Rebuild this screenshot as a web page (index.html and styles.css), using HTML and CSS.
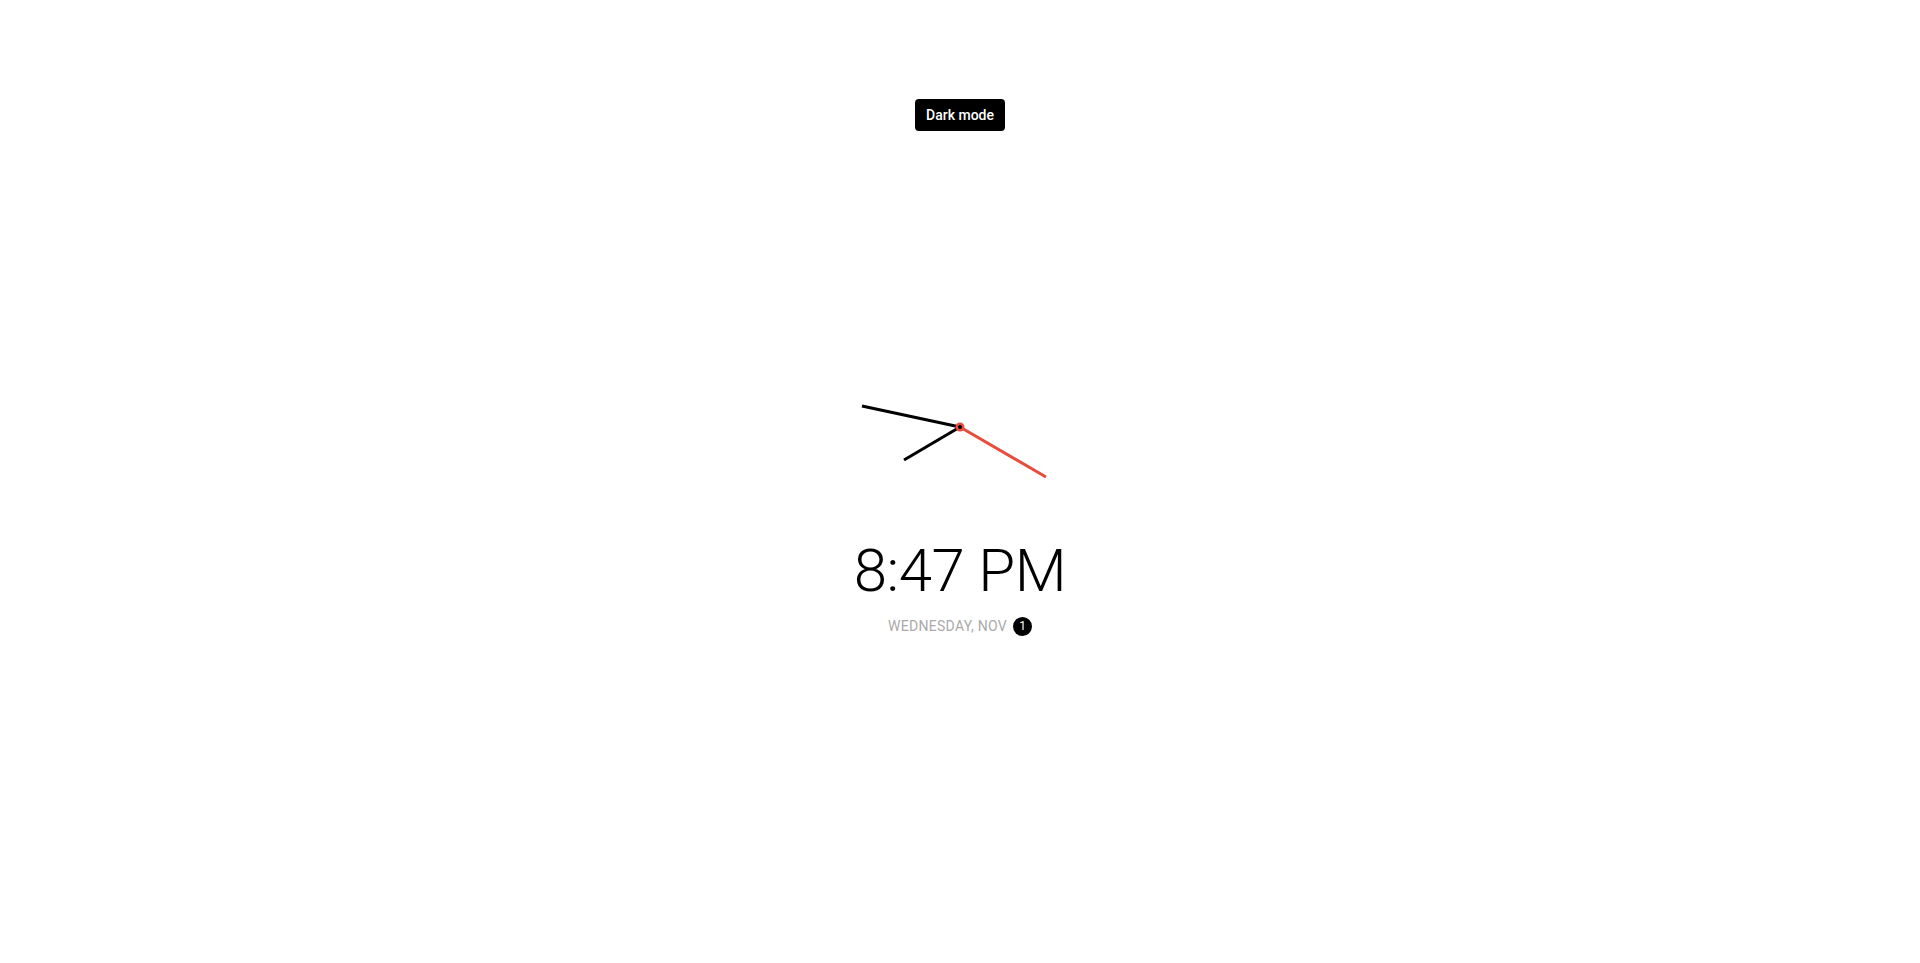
FILE: index.html
```html
<!DOCTYPE html>
<html lang="en">
<head>
<meta charset="utf-8">
<title>Clock</title>
<link rel="stylesheet" href="styles.css">
</head>
<body>
<button class="toggle">Dark mode</button>
<main class="clock-container">
  <div class="clock">
    <svg class="clock-face" width="200" height="200" viewBox="0 0 200 200">
      <line class="hand hour" x1="100" y1="100" x2="44" y2="133"/>
      <line class="hand minute" x1="100" y1="100" x2="2" y2="79"/>
      <line class="hand second" x1="100" y1="100" x2="186" y2="150"/>
      <circle cx="100" cy="100" r="4.5" class="center-ring"/>
      <circle cx="100" cy="100" r="2" class="center-dot"/>
    </svg>
  </div>
  <div class="time">8:47 PM</div>
  <div class="date">WEDNESDAY, NOV <span class="circle">1</span></div>
</main>
</body>
</html>
```
FILE: styles.css
```css
html, body {
  margin: 0;
  padding: 0;
  background: #ffffff;
  font-family: Roboto, "Liberation Sans", sans-serif;
}
body {
  min-height: 100vh;
  display: flex;
  align-items: center;
  justify-content: center;
  position: relative;
}
.toggle {
  position: absolute;
  top: 99px;
  left: 50%;
  transform: translateX(-50%);
  width: 90px;
  height: 32px;
  background: #000;
  color: #fff;
  border: none;
  border-radius: 4px;
  font-family: Roboto, "Liberation Sans", sans-serif;
  font-weight: 500;
  font-size: 14px;
  padding: 0;
  cursor: pointer;
}
.clock-container {
  display: flex;
  flex-direction: column;
  align-items: center;
}
.clock {
  width: 200px;
  height: 200px;
}
.clock-face {
  display: block;
}
.hand {
  stroke-width: 3;
  stroke-linecap: butt;
}
.hour, .minute {
  stroke: #000;
}
.second {
  stroke: #e74c3c;
}
.center-ring {
  fill: #e74c3c;
}
.center-dot {
  fill: #000;
}
.time {
  margin-top: 14px;
  font-size: 60px;
  line-height: 60px;
  font-weight: 300;
  letter-spacing: -0.5px;
  color: #000;
}
.date {
  margin-top: 15px;
  font-size: 14px;
  line-height: 20px;
  letter-spacing: 0.3px;
  color: #aaaaaa;
  display: flex;
  align-items: center;
  gap: 6px;
}
.circle {
  display: inline-flex;
  align-items: center;
  justify-content: center;
  width: 19px;
  height: 19px;
  border-radius: 50%;
  background: #000;
  color: #fff;
  font-size: 12px;
  letter-spacing: 0;
  line-height: 1;
}
```
